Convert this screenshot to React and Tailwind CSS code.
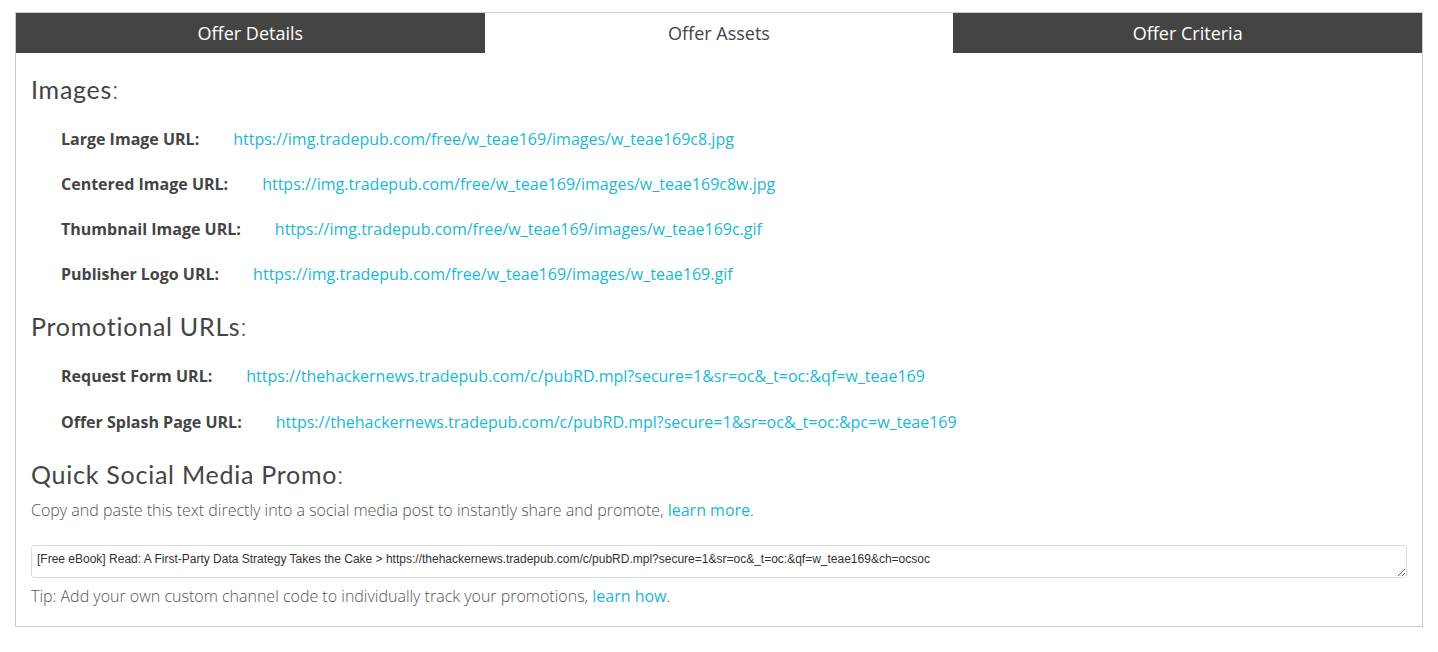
import React from 'react';

const imageRows = [
  { label: 'Large Image URL:', url: 'https://img.tradepub.com/free/w_teae169/images/w_teae169c8.jpg' },
  { label: 'Centered Image URL:', url: 'https://img.tradepub.com/free/w_teae169/images/w_teae169c8w.jpg' },
  { label: 'Thumbnail Image URL:', url: 'https://img.tradepub.com/free/w_teae169/images/w_teae169c.gif' },
  { label: 'Publisher Logo URL:', url: 'https://img.tradepub.com/free/w_teae169/images/w_teae169.gif' },
];

const promoRows = [
  { label: 'Request Form URL:', url: 'https://thehackernews.tradepub.com/c/pubRD.mpl?secure=1&sr=oc&_t=oc:&qf=w_teae169' },
  { label: 'Offer Splash Page URL:', url: 'https://thehackernews.tradepub.com/c/pubRD.mpl?secure=1&sr=oc&_t=oc:&pc=w_teae169' },
];

function Heading({ children }) {
  return (
    <h2 className="h-9 flex items-center text-[25px] font-[Lato,sans-serif] text-[#444] tracking-[0.75px]">
      {children}
      <span className="font-light text-[#555]">:</span>
    </h2>
  );
}

function UrlRow({ label, url, tall }) {
  return (
    <div className={`flex items-center gap-[34px] pl-[30px] ${tall ? 'h-[46px]' : 'h-[45px]'}`}>
      <span className="text-base font-bold text-[#444]">{label}</span>
      <a href="#" className="text-base text-[#1ab8d4]">{url}</a>
    </div>
  );
}

export default function App() {
  const tabs = ['Offer Details', 'Offer Assets', 'Offer Criteria'];
  return (
    <div className="min-h-screen bg-white pt-[12px] px-[15px] font-['Open_Sans',sans-serif]">
      <div className="w-[1408px] border border-[#cccccc]">
        {/* Tabs */}
        <div className="flex h-10">
          {tabs.map((t, i) => (
            <div
              key={t}
              className={`flex-1 flex items-center justify-center text-lg ${
                i === 1 ? 'bg-white text-[#444]' : 'bg-[#444442] text-white'
              }`}
            >
              {t}
            </div>
          ))}
        </div>

        <div className="px-[15px] pt-[19px] pb-[18px]">
          <Heading>Images</Heading>
          <div className="mt-2">
            {imageRows.map((r) => (
              <UrlRow key={r.label} {...r} />
            ))}
          </div>

          <div className="mt-[13px]">
            <Heading>Promotional URLs</Heading>
          </div>
          <div className="mt-2">
            {promoRows.map((r) => (
              <UrlRow key={r.label} {...r} tall />
            ))}
          </div>

          <div className="mt-[12px]">
            <Heading>Quick Social Media Promo</Heading>
          </div>
          <p className="mt-[5px] text-base leading-6 font-light text-[#555]">
            Copy and paste this text directly into a social media post to instantly share and promote,{' '}
            <a href="#" className="text-[#1ab8d4] font-normal">learn more</a>.
          </p>
          <textarea
            readOnly
            rows={1}
            className="block mt-[23px] w-full h-[33px] border border-[#dddddd] rounded-[3px] px-[5px] pt-[5px] text-xs text-[#333] font-['Liberation_Sans',Arial,sans-serif] outline-none"
            defaultValue="[Free eBook] Read: A First-Party Data Strategy Takes the Cake > https://thehackernews.tradepub.com/c/pubRD.mpl?secure=1&sr=oc&_t=oc:&qf=w_teae169&ch=ocsoc"
          />
          <p className="mt-[6px] text-base leading-6 font-light text-[#555]">
            Tip: Add your own custom channel code to individually track your promotions,{' '}
            <a href="#" className="text-[#1ab8d4] font-normal">learn how</a>.
          </p>
        </div>
      </div>
    </div>
  );
}
